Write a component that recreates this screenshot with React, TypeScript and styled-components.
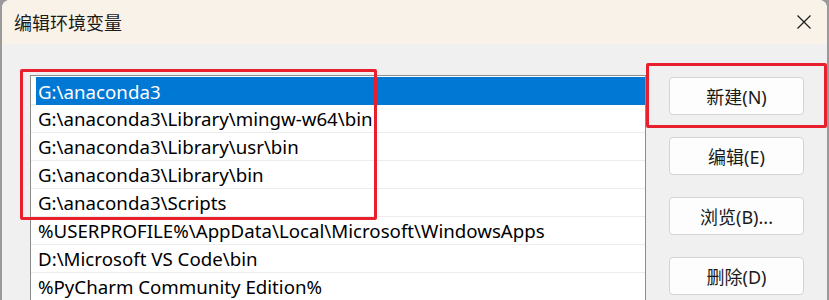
import React from 'react'
import styled, { createGlobalStyle } from 'styled-components'

const GlobalStyle = createGlobalStyle`
  html, body {
    margin: 0;
    padding: 0;
    height: 300px;
    overflow: hidden;
    background: #9a9a9a;
  }
  #root {
    height: 300px;
  }
`

const Window = styled.div`
  position: relative;
  margin-left: 2px;
  width: 825px;
  height: 300px;
  border-radius: 8px 8px 0 0;
  background: #f0f0f0;
  overflow: hidden;
  font-family: 'Noto Sans', 'Noto Sans CJK SC', sans-serif;
  color: #000;
`

const TitleBar = styled.div`
  display: flex;
  align-items: center;
  justify-content: space-between;
  height: 44px;
  padding-left: 12px;
  background: #f9f2e8;
`

const Title = styled.div`
  font-family: 'Noto Sans CJK SC', sans-serif;
  font-size: 18px;
  font-weight: 400;
  color: #1a1a1a;
`

const CloseButton = styled.div`
  display: flex;
  align-items: center;
  justify-content: center;
  width: 46px;
  height: 44px;
`

const Body = styled.div`
  display: flex;
  align-items: flex-start;
  gap: 23px;
  padding: 31px 0 0 28px;
`

const List = styled.div`
  display: flex;
  flex-direction: column;
  width: 614px;
  height: 225px;
  overflow: hidden;
  padding-top: 1px;
  background: #fff;
  border: 1px solid #8c8c8c;
  border-bottom: none;
`

const Row = styled.div`
  display: flex;
  flex-shrink: 0;
  height: 27px;
  border-bottom: 1px solid #ececec;
`

const RowLabel = styled.div<{ $selected?: boolean }>`
  flex: 1;
  display: flex;
  align-items: center;
  margin-left: 5px;
  padding-left: 2px;
  font-size: 18.7px;
  white-space: nowrap;
  background: ${(p) => (p.$selected ? '#0078d4' : 'transparent')};
  color: ${(p) => (p.$selected ? '#fff' : '#000')};
  margin-bottom: ${(p) => (p.$selected ? '-1px' : '0')};
`

const ButtonColumn = styled.div`
  display: flex;
  flex-direction: column;
  gap: 22px;
  padding-top: 2px;
`

const Button = styled.button`
  width: 135px;
  height: 38px;
  padding: 0;
  background: #fdfdfd;
  border: 1px solid #d3d3d3;
  border-radius: 4px;
  font-family: 'Noto Sans', 'Noto Sans CJK SC', sans-serif;
  font-size: 18px;
  color: #1a1a1a;
`

const Highlight = styled.div<{ $left: number; $top: number; $w: number; $h: number }>`
  position: absolute;
  left: ${(p) => p.$left}px;
  top: ${(p) => p.$top}px;
  width: ${(p) => p.$w}px;
  height: ${(p) => p.$h}px;
  box-sizing: border-box;
  border: 3px solid #e81f2c;
  border-radius: 2px;
  pointer-events: none;
`

const paths = [
  'G:\\anaconda3',
  'G:\\anaconda3\\Library\\mingw-w64\\bin',
  'G:\\anaconda3\\Library\\usr\\bin',
  'G:\\anaconda3\\Library\\bin',
  'G:\\anaconda3\\Scripts',
  '%USERPROFILE%\\AppData\\Local\\Microsoft\\WindowsApps',
  'D:\\Microsoft VS Code\\bin',
  '%PyCharm Community Edition%',
  '',
]

const buttons = ['新建(N)', '编辑(E)', '浏览(B)...', '删除(D)']

export default function App() {
  return (
    <>
      <GlobalStyle />
      <Window>
        <TitleBar>
          <Title>编辑环境变量</Title>
          <CloseButton>
            <svg width="16" height="16" viewBox="0 0 16 16">
              <path d="M1.5 1.5 L14.5 14.5 M14.5 1.5 L1.5 14.5" stroke="#1a1a1a" strokeWidth="1.2" fill="none" />
            </svg>
          </CloseButton>
        </TitleBar>
        <Body>
          <List>
            {paths.map((p, i) => (
              <Row key={i}>
                <RowLabel $selected={i === 0}>{p}</RowLabel>
              </Row>
            ))}
          </List>
          <ButtonColumn>
            {buttons.map((b) => (
              <Button key={b}>{b}</Button>
            ))}
          </ButtonColumn>
        </Body>
        <Highlight $left={18} $top={69} $w={357} $h={151} />
        <Highlight $left={644} $top={63} $w={181} $h={65} />
      </Window>
    </>
  )
}
